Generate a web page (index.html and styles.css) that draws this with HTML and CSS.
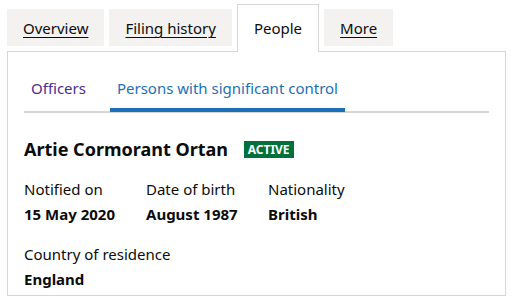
FILE: index.html
```html
<!DOCTYPE html>
<html lang="en">
<head>
    <meta charset="UTF-8">
    <meta name="viewport" content="width=device-width, initial-scale=1.0">
    <link rel="stylesheet" href="styles.css">
    <title>People</title>
</head>
<body>
    <div class="page">
        <ul class="tabs">
            <li class="tab"><a href="#">Overview</a></li>
            <li class="tab"><a href="#">Filing history</a></li>
            <li class="tab tab-active"><span>People</span></li>
            <li class="tab"><a href="#">More</a></li>
        </ul>
        <div class="panel">
            <ul class="subtabs">
                <li class="subtab"><a class="visited" href="#">Officers</a></li>
                <li class="subtab subtab-active"><a href="#">Persons with significant control</a></li>
            </ul>
            <div class="person">
                <h2 class="person-name">Artie Cormorant Ortan <span class="badge">ACTIVE</span></h2>
                <div class="details">
                    <dl class="detail">
                        <dt>Notified on</dt>
                        <dd>15 May 2020</dd>
                    </dl>
                    <dl class="detail">
                        <dt>Date of birth</dt>
                        <dd>August 1987</dd>
                    </dl>
                    <dl class="detail">
                        <dt>Nationality</dt>
                        <dd>British</dd>
                    </dl>
                </div>
                <div class="details">
                    <dl class="detail">
                        <dt>Country of residence</dt>
                        <dd>England</dd>
                    </dl>
                </div>
            </div>
        </div>
    </div>
</body>
</html>
```

FILE: styles.css
```css
body {
    margin: 0;
    font-family: "Noto Sans", Arial, sans-serif;
    color: #0b0c0c;
    background: #fff;
}
.page {
    padding: 4px 6px 0 7px;
}
/* top tabs */
.tabs {
    display: flex;
    align-items: flex-start;
    gap: 5px;
    margin: 0;
    padding: 0;
    list-style: none;
}
.tab {
    margin-top: 5px;
    height: 37px;
    padding: 0 16px;
    background: #f3f2f1;
    font-size: 15px;
    line-height: 38px;
}
.tab a {
    color: #0b0c0c;
    text-decoration: underline;
    text-underline-offset: 3px;
    text-decoration-thickness: 1px;
}
.tab-active {
    margin-top: 0;
    height: 47px;
    line-height: 46px;
    padding: 0 16px;
    background: #fff;
    border: 1px solid #d6d6d6;
    border-bottom: 0;
    position: relative;
    margin-bottom: -1px;
}
.panel {
    border: 1px solid #d6d6d6;
    padding: 0 16px 4px;
}
/* sub tabs */
.subtabs {
    display: flex;
    gap: 17px;
    margin: 25px 0 0;
    padding: 0;
    list-style: none;
    border-bottom: 2px solid #d6d6d6;
}
.subtab {
    padding: 0 7px 12px;
    font-size: 15px;
    line-height: 22px;
}
.subtab a {
    color: #1d70b8;
    text-decoration: none;
}
.subtab a.visited {
    color: #4c2c92;
}
.subtab-active {
    border-bottom: 4px solid #1d70b8;
    margin-bottom: -1px;
    padding-bottom: 8px;
}
/* person */
.person-name {
    margin: 24px 0 0;
    font-size: 18px;
    line-height: 24px;
    font-weight: 700;
}
.badge {
    display: inline-block;
    margin-left: 11px;
    padding: 0 4px;
    background: #00703c;
    color: #fff;
    font-size: 12px;
    line-height: 17px;
    font-weight: 700;
    vertical-align: 2px;
}
.details {
    display: flex;
    margin-top: 16px;
}
.detail {
    width: 122px;
    margin: 0;
    font-size: 15px;
    line-height: 24px;
}
.details + .details .detail {
    width: 200px;
}
.detail dt {
    margin: 0;
}
.detail dd {
    margin: 1px 0 0;
    font-weight: 700;
}
```
